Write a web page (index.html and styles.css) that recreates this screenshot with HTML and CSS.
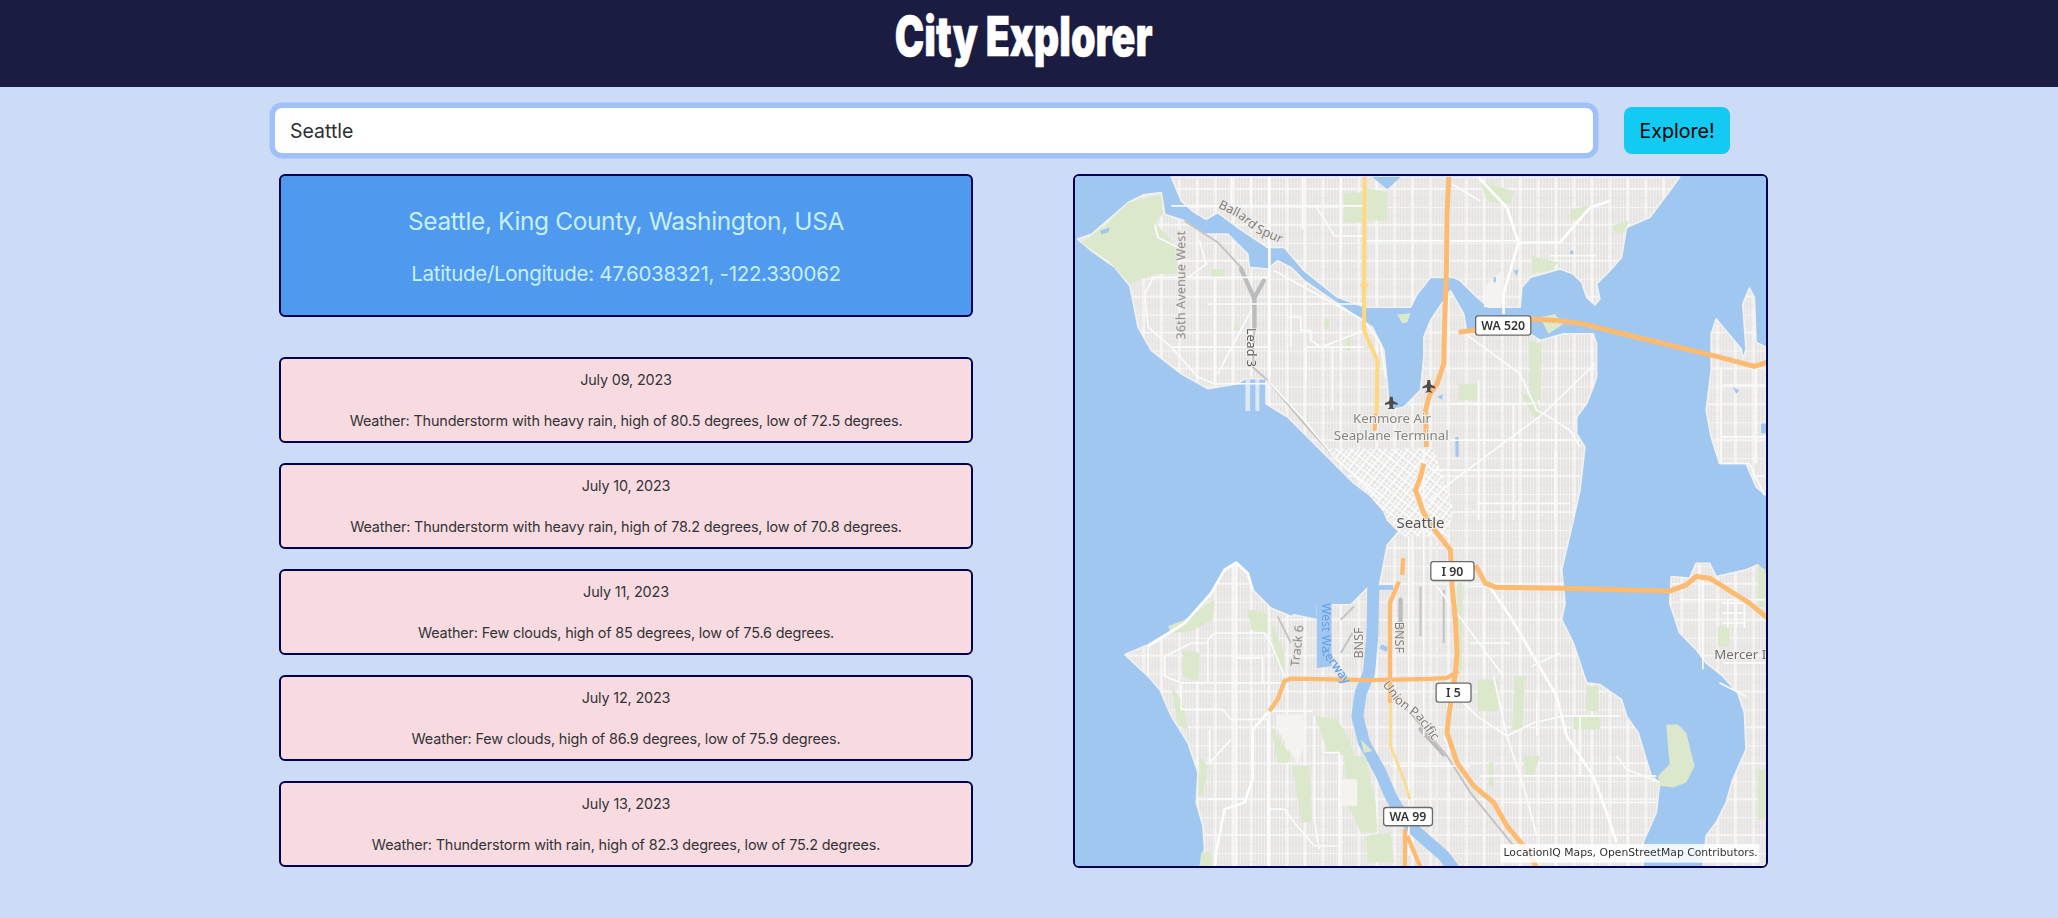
FILE: index.html
```html
<!DOCTYPE html>
<html lang="en">
<head>
<meta charset="utf-8">
<title>City Explorer</title>
<link rel="stylesheet" href="styles.css">
</head>
<body>
<header class="top"><h1 class="title">City Explorer</h1></header>
<main class="page">
  <form class="search">
    <input class="search-input" type="text" value="Seattle">
    <button class="explore" type="button">Explore!</button>
  </form>
  <div class="columns">
    <section class="left">
      <div class="city">
        <h2 class="city-name">Seattle, King County, Washington, USA</h2>
        <p class="city-coords">Latitude/Longitude: 47.6038321, -122.330062</p>
      </div>
      <ul class="forecast">
        <li class="day"><p class="day-text">July 09, 2023</p><p class="day-text">Weather: Thunderstorm with heavy rain, high of 80.5 degrees, low of 72.5 degrees.</p></li>
        <li class="day"><p class="day-text">July 10, 2023</p><p class="day-text">Weather: Thunderstorm with heavy rain, high of 78.2 degrees, low of 70.8 degrees.</p></li>
        <li class="day"><p class="day-text">July 11, 2023</p><p class="day-text">Weather: Few clouds, high of 85 degrees, low of 75.6 degrees.</p></li>
        <li class="day"><p class="day-text">July 12, 2023</p><p class="day-text">Weather: Few clouds, high of 86.9 degrees, low of 75.9 degrees.</p></li>
        <li class="day"><p class="day-text">July 13, 2023</p><p class="day-text">Weather: Thunderstorm with rain, high of 82.3 degrees, low of 75.2 degrees.</p></li>
      </ul>
    </section>
    <figure class="map">
      <svg class="map-svg" viewBox="10 15 2080 2076" preserveAspectRatio="none" xmlns="http://www.w3.org/2000/svg">
        <defs>
          <pattern id="grid" patternUnits="userSpaceOnUse" width="108" height="108">
            <rect width="108" height="108" fill="#f2f0ee"/>
            <path d="M9 0V108M18 0V108M27 0V108M36 0V108M45 0V108M63 0V108M72 0V108M81 0V108M90 0V108M99 0V108" stroke="#d9d8d6" stroke-width="3"/>
            <path d="M0 27H108M0 81H108" stroke="#e6e5e3" stroke-width="3"/>
            <path d="M0 0H108M0 54H108M54 0V108M0 0V108" stroke="#fafaf9" stroke-width="4"/>
          </pattern>
          <pattern id="downtown" patternUnits="userSpaceOnUse" width="26" height="26" patternTransform="rotate(38)">
            <rect width="26" height="26" fill="#e6e5e3"/>
            <path d="M0 0H26M0 13H26M0 0V26M13 0V26" stroke="#ffffff" stroke-width="5"/>
          </pattern>
          <path id="p-ballard" d="M440 110L500 140 560 188 640 222"/>
          <path id="p-waterway" d="M752 1300L752 1450 790 1500 840 1575"/>
          <path id="p-union" d="M935 1545L975 1600 1040 1650 1110 1745"/>
        </defs>
        <rect class="water" x="0" y="0" width="2100" height="2100"/>
        <path class="land" fill="url(#grid)" d="M300 18H1830L1800 60 1740 140 1670 170 1655 260 1620 300 1580 340 1590 385 1575 403 1550 380 1535 335 1510 310 1470 295 1380 320 1355 350 1350 410H1255L1215 375 1170 330 1150 320H1080L1040 370 1020 410H885L800 380 700 300 640 230H590L500 170 440 125 405 145 370 125 330 90Z"/>
        <path class="land" fill="url(#grid)" d="M18 205L60 190 130 130 170 95 215 72 270 65 280 130 340 150 400 190H470L530 250 535 290 590 295 620 270 660 290 700 330 860 440 905 470 940 540 950 640 955 720 1000 710 1050 660 1060 560V500L1080 450 1140 360 1180 430 1190 490H1380L1410 510 1480 490H1570L1580 520V620L1570 650 1550 700 1520 740V790L1545 830 1530 960 1510 1050 1475 1200 1485 1300 1475 1350 1510 1420 1550 1540 1590 1545 1655 1590 1670 1640 1705 1690 1745 1820 1770 1840 1760 1930 1720 2020V2100H1100V1100H1000L950 1050 930 1000 850 940 780 870 700 790 650 740 585 700V625H520L500 640 410 655 330 610 240 540 200 470 175 345 130 290 60 240Z"/>
        <path class="land" fill="url(#grid)" d="M160 1455L230 1425 340 1360 420 1270 460 1200 495 1178 530 1210 545 1260 600 1315 660 1340 670 1335 740 1350V1305H840L890 1255H925L950 1125 980 1090 1100 1060V2100H385L400 2040 395 1970 375 1900 380 1810 350 1720 300 1640 265 1560 230 1520Z"/>
        <path class="land" fill="url(#grid)" d="M1805 1220L1860 1225 1880 1180H1920L1940 1220 2030 1200 2065 1185 2095 1220V2100H1900L1910 2000 1940 1960 1970 1900 1990 1830 2030 1740 2025 1630 2005 1570 1960 1520 1910 1480 1880 1440 1830 1390 1800 1300Z"/>
        <path class="land" fill="url(#grid)" d="M1925 490L1940 445 2015 535 2022 565 2030 535 2020 400 2040 352 2055 380 2060 515 2090 530V975L2060 950 2030 880H1950L1925 800 1910 720 1925 600Z"/>
        <path class="water" d="M905 18H990L950 55Z"/>
        <path class="water" d="M738 1290H782V1490L738 1495Z"/>
        <path class="channel" d="M908 1250L905 1400 895 1510 870 1570 860 1640 880 1720 930 1810 960 1880 1000 1950 1040 1990 1120 2060 1150 2100"/>
        <path class="channel-thin" d="M925 1253H968"/>
        <path class="channel-thin" d="M930 1430L950 1440"/>

        <g class="park">
          <path d="M30 215L100 165 170 95 270 70 275 130 250 155 320 230 315 310H250L175 340 110 270Z"/>
          <path d="M820 65H880V155H820Z"/>
          <path d="M890 50L950 65V150H890Z"/>
          <path d="M980 432L1020 428 1010 455 995 458Z"/>
          <path d="M760 445H775V475H760Z"/>
          <path d="M825 500H840V540H825Z"/>
          <path d="M490 460H500V480H490Z"/>
          <path d="M420 295H460V320H420Z"/>
          <path d="M1230 30L1330 60 1320 100 1250 90Z"/>
          <path d="M1500 115L1560 105 1520 150H1505Z"/>
          <path d="M1625 165L1680 150 1660 185 1640 185Z"/>
          <path d="M1385 255L1465 275 1440 300 1385 310Z"/>
          <path d="M1165 640H1220V690H1165Z"/>
          <path d="M1375 510L1415 520 1410 690H1380Z"/>
          <path d="M1350 665L1400 690 1415 740H1390Z"/>
          <path d="M1410 440L1455 430 1480 460 1435 490Z"/>
          <path d="M1222 1530H1285V1625H1222Z"/>
          <path d="M1550 1550H1585V1625H1550Z"/>
          <path d="M1335 1520H1365L1355 1680H1325Z"/>
          <path d="M1510 1640H1590V1680H1510Z"/>
          <path d="M1360 1760H1410L1390 1820H1365Z"/>
          <path d="M1255 1780H1270V1850H1255Z"/>
          <path d="M1160 1240H1175V1500H1160Z"/>
          <path d="M2065 1185L2088 1200V1310H2065Z"/>
          <path d="M1945 1370H1980V1430H1945Z"/>
          <path d="M2065 1800H2088V1950H2065Z"/>
          <path d="M1790 1665L1825 1665 1850 1690 1875 1790 1850 1840 1810 1855 1770 1850 1765 1820 1800 1785 1795 1730Z"/>
          <path d="M335 1440L385 1450 382 1535 335 1520Z"/>
          <path d="M300 1550L335 1600 350 1680 320 1670Z"/>
          <path d="M290 1370L340 1350 430 1290 425 1350 360 1385 300 1390Z"/>
          <path d="M600 1350L640 1450 635 1510 610 1470Z"/>
          <path d="M600 1670L660 1760 650 1780H620Z"/>
          <path d="M665 1790H715L725 1960H690Z"/>
          <path d="M735 1640L800 1650 840 1720 850 1760 770 1750Z"/>
          <path d="M820 1760H885L915 1900 920 1990H870L830 1900Z"/>
          <path d="M885 2000L960 1990 970 2080H890Z"/>
          <path d="M390 2050L420 2050V2095H385Z"/>
          <path d="M385 1760L410 1790 395 1880H380Z"/>
          <path d="M530 1320L590 1330 590 1390 540 1380Z"/>
          <path d="M870 1710L905 1745 880 1750Z"/>
        </g>
        <path class="pale" d="M615 1635H695L700 1730 680 1785 620 1680Z"/>
        <path class="pale" d="M815 1830H860V1910H815Z"/>
        <path class="pale" d="M1250 340L1295 300 1290 410H1240Z"/>
        <path class="pier" d="M523 625H537V722H523ZM553 625H565V722H553Z"/>
        <path class="downtown" fill="url(#downtown)" d="M775 835H1090L1150 1020 1130 1100H1000L950 1040Z"/>
        <path class="pond" d="M85 180L115 170 110 185 90 190ZM1330 300L1345 296 1340 316ZM1100 680L1118 672 1115 688ZM1155 800H1165V860H1155ZM1990 650L2010 660 2000 670ZM2075 760H2090V790H2075ZM1650 800L1660 795 1660 810ZM1500 240H1510V250H1500ZM1270 320H1277V335H1270Z"/>

        <path class="rail" d="M340 150L440 215 510 290 548 380 550 470 545 590 590 630 700 760 790 860"/>
        <path class="rail-w" d="M510 295L548 380M578 330L548 385M550 385V470M1050 1680L1120 1755"/>
        <path class="rail" d="M1010 1620L1130 1760 1200 1870 1330 2030"/>
        <path class="rail-w" d="M990 1290V1400"/>
        <path class="rail" d="M1050 1250V1400M1120 1260V1420M810 1450L845 1390M620 1340L660 1420M810 1350L850 1310"/>

        <path class="st" d="M595 18V625M240 320H590M410 400H880M705 530H880M300 105H880M880 210H1290M480 18V105M540 18V105M695 18V175M810 18V250M735 105L790 195H880M245 320L220 370 230 470 300 530 380 620 430 640H590M250 160L260 200 330 235M385 210L405 280 350 320M430 640V330M440 610L540 420M660 400V530M595 400H640M610 300L700 350 790 400 880 450 930 520 945 620M590 630L700 750 790 860 930 990M650 440H690V480H720V510L750 530 880 480M705 530V630M785 530V720M300 530H590"/>
        <path class="st-thick" d="M595 18V620M1225 20L1310 110 1345 215 1300 370V430M1340 215H1470L1560 110 1620 90M1210 1180L1320 1340 1390 1460 1460 1580 1490 1700 1570 1820 1610 1930 1640 2020M595 1625L545 1680V1830L520 1900 460 1920 435 2050 430 2100M230 1430L340 1360 420 1270 460 1200 495 1178 530 1210 545 1260"/>
        <path class="st" d="M1145 40L1230 90M1340 210H1150M1440 255H1580M1185 490L1350 610 1400 720 1420 730M1420 730L1575 580M1420 730L1500 780 1530 830M1420 730L1150 930 1080 990M1225 630V1050M1330 700V1050M1455 840V1050M1140 700H1400M1140 810H1530M1085 900H1460M1220 1000H1500M1060 835V1100M1955 590V880H2040L2085 975M2060 590V880M1955 645H2088M1955 800H2088M1190 1250H1480M1240 1270V1520M1270 1520L1310 1700 1360 1850 1400 2000M1160 1580L1220 1640 1310 1700M1310 1700L1390 1660 1480 1640H1650M1230 1820H1760M1290 1900H1760M1200 1420H1320M1640 1760L1670 1800 1770 1840M1470 1450L1385 1490M1830 1290H2088M1900 1230V1500M1950 1540L2030 1580M1960 1480H2088M1960 1300H2030M1960 1330H2030M1960 1360H2030M1975 1290V1375M2000 1290V1375M2025 1290V1375M495 1180V2100M430 1390H580L600 1420 640 1520M430 1390L410 1410V1540M230 1430V1520M280 1460L360 1420H410M280 1460V1520L330 1540H640M330 1545V1620H455L480 1650H590V2100M415 1680V1780L480 1710M410 1890H520M495 1465H575V1540M595 1625V2100M595 1920H640L670 1960 730 2030H800M730 1640V1950L745 2040M760 1750H805V2100M600 1625H725M1015 1100V2060M1060 1100V1700M960 1790H1200M1120 1700L1160 1780M1100 1250L1300 1520M1530 1640V1820M1400 1590V1700"/>

        <path class="yw" d="M882 18L880 480 920 570 918 730"/>
        <path class="arrow" d="M866 340H896L881 360Z"/>
        <path class="yw-thin" d="M960 1600V1730L1000 1830 1018 1890"/>
        <path class="fw-thin" d="M915 730L912 782"/>
        <path class="fw" d="M1135 18L1130 130 1128 300 1122 480 1120 580 1100 640 1078 672 1065 720 1068 830M1060 880L1050 920 1035 960 1060 1030 1100 1090 1140 1140 1145 1250 1155 1350 1160 1450 1155 1510 1135 1640 1130 1690 1160 1780 1210 1850 1270 1900 1310 1970 1360 2030 1400 2095"/>
        <path class="fw" d="M1165 485L1215 478M1380 445L1460 450 1530 458 1680 495 1950 560 2055 588 2095 575"/>
        <path class="fw" d="M1215 1185L1245 1240 1275 1252 1480 1255 1800 1264 1850 1245 1880 1220 1920 1225 1960 1250 2040 1300 2095 1345"/>
        <path class="fw-mid" d="M595 1625L620 1590 640 1535 660 1527 900 1532 1080 1528 1130 1525 1165 1505"/>
        <path class="fw-mid" d="M998 1165L995 1215M985 1235L958 1300V1600M1003 1980V2095M1010 2000L1050 2095"/>

        <g class="plane">
          <path d="M958 679H966L968 692 981 699V704L968 701 967 711 972 715V717L962 715 952 717V715L957 711 956 701 943 704V699L956 692Z"/>
          <path d="M1071 629H1079L1081 642 1094 649V654L1081 651 1080 661 1085 665V667L1075 665 1065 667V665L1070 661 1069 651 1056 654V649L1069 642Z"/>
        </g>

        <g class="lbl-road">
          <text><textPath href="#p-ballard">Ballard Spur</textPath></text>
          <text transform="translate(341 507) rotate(-90)" textLength="327">36th Avenue West</text>
          <text transform="translate(684 1492) rotate(-84)">Track 6</text>
          <text transform="translate(878 1467) rotate(-90)">BNSF</text>
          <text transform="translate(972 1356) rotate(90)">BNSF</text>
          <text><textPath href="#p-union">Union Pacific</textPath></text>
          <text class="lead" transform="translate(527 472) rotate(90)">Lead 3</text>
        </g>
        <text class="lbl-water"><textPath href="#p-waterway">West Waterway</textPath></text>
        <g class="lbl-place">
          <text x="964" y="759">Kenmore Air</text>
          <text x="962" y="809">Seaplane Terminal</text>
        </g>
        <text class="lbl-city" x="1050" y="1074">Seattle</text>
        <text class="lbl-mercer" x="1934" y="1468">Mercer I</text>

        <g class="shield">
          <rect x="1216" y="436" width="166" height="58" rx="8"/><text x="1299" y="478">WA 520</text>
          <rect x="1081" y="1175" width="130" height="57" rx="8"/><text x="1146" y="1217">I 90</text>
          <rect x="1097" y="1541" width="105" height="57" rx="8"/><text x="1149" y="1583">I 5</text>
          <rect x="939" y="1915" width="147" height="55" rx="8"/><text x="1012" y="1956">WA 99</text>
        </g>

        <rect class="credit-bg" x="1290" y="2025" width="780" height="56"/>
        <text class="credit" x="1300" y="2062">LocationIQ Maps, OpenStreetMap Contributors.</text>
      </svg>
    </figure>
  </div>
</main>
</body>
</html>
```
FILE: styles.css
```css
* { box-sizing: border-box; }
html, body { margin: 0; padding: 0; }
body {
  background: #cddcf6;
  font-family: "Inter", "Liberation Sans", sans-serif;
  color: #212529;
  overflow: hidden;
  height: 918px;
}
.top {
  height: 87px;
  background: #1b1c41;
  display: flex;
  justify-content: center;
  padding-right: 11px;
}
.title {
  margin: 4px 0 0;
  font-family: "Inter", "Liberation Sans", sans-serif;
  font-weight: 900;
  font-size: 55px;
  line-height: 64px;
  color: #fff;
  transform: scaleX(0.717);
  -webkit-text-stroke: 0.6px #fff;
  white-space: nowrap;
}
.page { padding: 20px 0 0 275px; }
.search { display: flex; align-items: center; height: 47px; margin: 0; }
.search-input {
  width: 1318px;
  height: 45px;
  border: 0;
  border-radius: 7px;
  background: #fff;
  padding: 0 15px;
  font: 400 19.5px "Inter", sans-serif;
  color: #2e2e35;
  box-shadow: 0 0 0 5.5px #9fc0f9;
  outline: 0;
}
.explore {
  margin-left: 31px;
  width: 106px;
  height: 47px;
  border: 0;
  border-radius: 8px;
  background: #13caf2;
  font: 400 19.6px "Inter", sans-serif;
  color: #000;
  padding: 0;
}
.columns { display: flex; gap: 100px; margin: 20px 0 0 4px; align-items: flex-start; }
.left { width: 694px; }
.city {
  height: 143px;
  background: #4f99ee;
  border: 2px solid #02024e;
  border-radius: 6px;
  color: #c6effa;
  text-align: center;
  padding-top: 27px;
}
.city-name { margin: 0; font-size: 24.5px; letter-spacing: -0.4px; line-height: 36px; font-weight: 400; }
.city-coords { margin: 17px 0 0; font-size: 20.5px; letter-spacing: -0.3px; line-height: 36px; }
.forecast { list-style: none; margin: 40px 0 0; padding: 0; display: flex; flex-direction: column; gap: 20px; }
.day {
  height: 86px;
  background: #f7dbe0;
  border: 2px solid #02024e;
  border-radius: 6px;
  text-align: center;
  padding: 11px 0 0;
}
.day-text { margin: 0 0 21px; font-size: 14.4px; letter-spacing: -0.16px; line-height: 20px; color: #333338; }

.map {
  margin: 0;
  width: 695px;
  height: 694px;
  border: 2px solid #02024e;
  border-radius: 6px;
  overflow: hidden;
  background: #a0c7f0;
}
.map-svg { display: block; width: 100%; height: 100%; filter: blur(0.6px); }
.water { fill: #a0c7f0; }
.land { stroke: #f3f1ee; stroke-width: 5; stroke-linejoin: round; }
.channel { fill: none; stroke: #a0c7f0; stroke-width: 36; stroke-linejoin: round; }
.channel-thin { fill: none; stroke: #a0c7f0; stroke-width: 14; }
.park { fill: #dce8cc; }
.pale { fill: #f5f3f0; }
.pier { fill: #dbe7f3; }
.pond { fill: #a0c7f0; }
.st { fill: none; stroke: #fbfbfb; stroke-width: 5; stroke-linejoin: round; }
.st-thick { fill: none; stroke: #fdfdfd; stroke-width: 8; stroke-linejoin: round; }
.rail { fill: none; stroke: #c4c4c4; stroke-width: 6; stroke-linejoin: round; }
.rail-w { fill: none; stroke: #bcbcbc; stroke-width: 13; stroke-linecap: round; }
.yw { fill: none; stroke: #fdd87c; stroke-width: 12; stroke-linejoin: round; }
.yw-thin { fill: none; stroke: #fbdc8a; stroke-width: 8; stroke-linejoin: round; }
.arrow { fill: #fdd87c; }
.fw { fill: none; stroke: #fcbb71; stroke-width: 15; stroke-linejoin: round; }
.fw-thin { fill: none; stroke: #fcbb71; stroke-width: 12; }
.fw-mid { fill: none; stroke: #fcbb71; stroke-width: 13; stroke-linejoin: round; }
.plane { fill: #4c4c4c; }
.lbl-road text {
  font: 400 38px "Noto Sans", sans-serif;
  fill: #857c77;
  paint-order: stroke;
  stroke: #f2f0ed;
  stroke-width: 4;
}
.lbl-road .lead { fill: #5d5d5d; }
.lbl-water {
  font: 400 37px "Noto Sans", sans-serif;
  fill: #629fe4;
  paint-order: stroke;
  stroke: #a8cbf2;
  stroke-width: 2;
}
.lbl-place text {
  font: 400 40px "Noto Sans", sans-serif;
  fill: #858585;
  text-anchor: middle;
  paint-order: stroke;
  stroke: #f4f2ef;
  stroke-width: 6;
}
.lbl-city {
  font: 400 45px "Noto Sans", sans-serif;
  fill: #555;
  text-anchor: middle;
  paint-order: stroke;
  stroke: #f4f2ef;
  stroke-width: 6;
}
.lbl-mercer {
  font: 400 40px "Noto Sans", sans-serif;
  fill: #707070;
  paint-order: stroke;
  stroke: #f4f2ef;
  stroke-width: 5;
}
.shield rect { fill: #fff; stroke: #6b6b6b; stroke-width: 4; }
.shield text { font: 600 37px "Noto Sans", sans-serif; fill: #333; text-anchor: middle; }
.credit-bg { fill: #fff; opacity: 0.85; }
.credit { font: 400 32.5px "DejaVu Sans", sans-serif; fill: #333; }
```
